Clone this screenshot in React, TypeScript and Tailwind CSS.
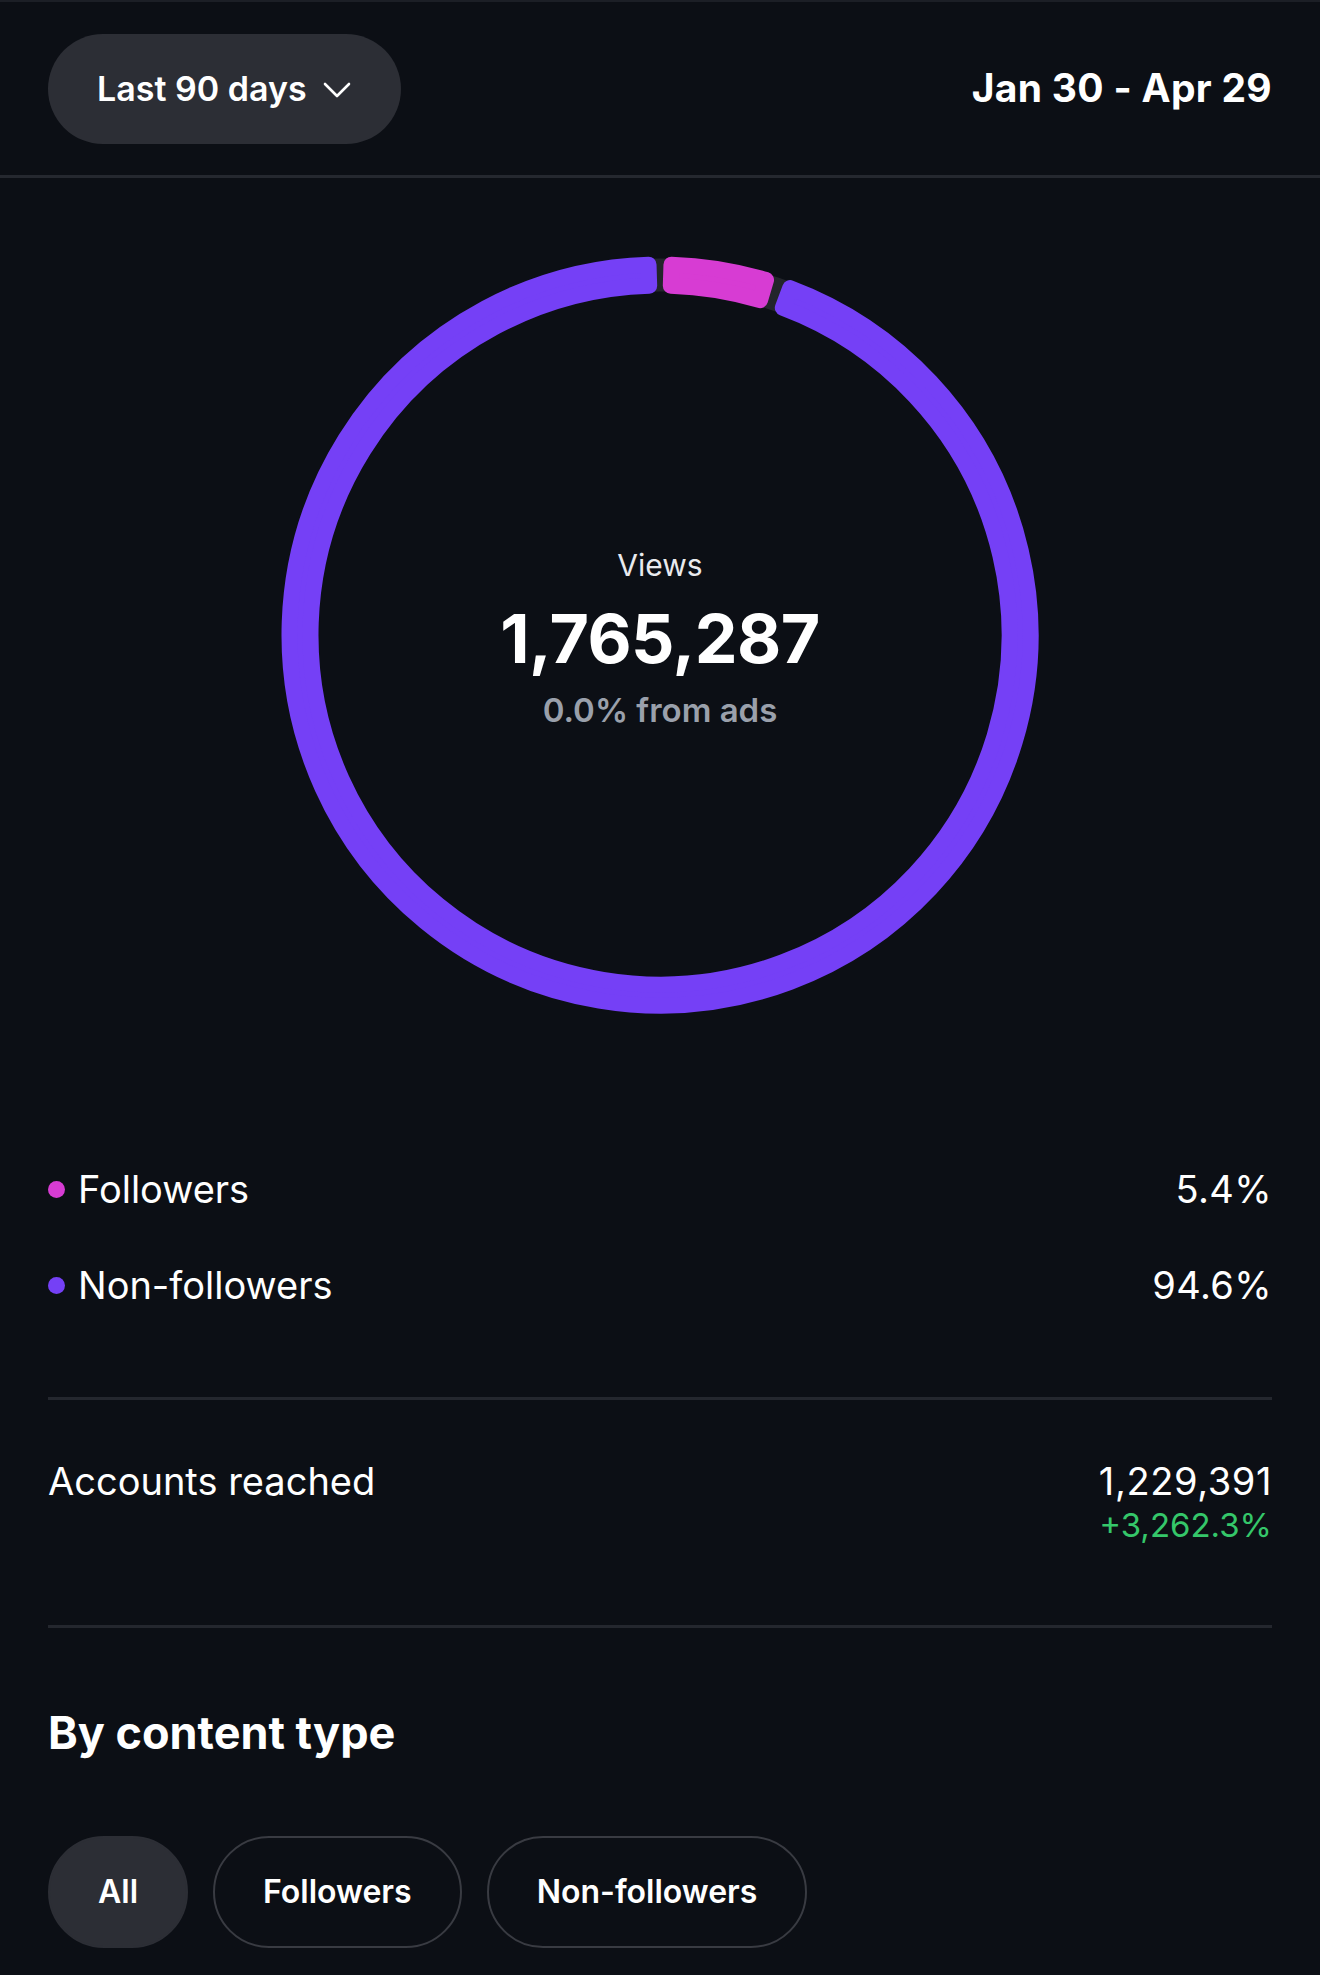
import React from 'react';

const CX = 380;
const CY = 380;
const R_MID = 360;
const BAND = 37;
const CORNER = 8;

function polar(r: number, deg: number) {
  const a = ((deg - 90) * Math.PI) / 180;
  return [CX + r * Math.cos(a), CY + r * Math.sin(a)];
}

// annular sector, shrunk by the corner radius so that a round-joined stroke of 2*CORNER
// gives back the full band with softened corners
function sector(a0: number, a1: number) {
  const rIn = R_MID - BAND / 2 + CORNER;
  const rOut = R_MID + BAND / 2 - CORNER;
  const pad = (CORNER / R_MID) * (180 / Math.PI);
  const s = a0 + pad;
  const e = a1 - pad;
  const large = e - s > 180 ? 1 : 0;
  const [x0, y0] = polar(rOut, s);
  const [x1, y1] = polar(rOut, e);
  const [x2, y2] = polar(rIn, e);
  const [x3, y3] = polar(rIn, s);
  return `M${x0} ${y0} A${rOut} ${rOut} 0 ${large} 1 ${x1} ${y1} L${x2} ${y2} A${rIn} ${rIn} 0 ${large} 0 ${x3} ${y3} Z`;
}

const segments = [
  { from: 0.5, to: 17.9, color: '#d73cd3' },
  { from: 19.3, to: 359.5, color: '#7540f6' },
];

const ViewsRing: React.FC = () => (
  <div className="relative w-[760px] h-[760px]">
    <svg width="760" height="760" viewBox="0 0 760 760">
      <circle cx={CX} cy={CY} r={R_MID} fill="none" stroke="#23252b" strokeWidth={BAND - 4} />
      {segments.map((s) => (
        <path
          key={s.color}
          d={sector(s.from, s.to)}
          fill={s.color}
          stroke={s.color}
          strokeWidth={CORNER * 2}
          strokeLinejoin="round"
        />
      ))}
    </svg>
    <div className="absolute inset-0 flex flex-col items-center justify-center pt-[6px]">
      <div className="text-[30px] leading-[36px] text-[#e9eaee]">Views</div>
      <div className="mt-[17px] text-[68px] leading-[76px] font-bold text-white tracking-[-0.5px]">1,765,287</div>
      <div className="mt-[15px] text-[33px] leading-[38px] font-semibold text-[#9aa0ab]">0.0% from ads</div>
    </div>
  </div>
);

const legend = [
  { label: 'Followers', value: '5.4%', color: 'bg-[#d73cd3]' },
  { label: 'Non-followers', value: '94.6%', color: 'bg-[#7540f6]' },
];

const chips = ['All', 'Followers', 'Non-followers'];

export default function App() {
  return (
    <div className="min-h-[1975px] bg-[#0c0f15] text-white font-['Inter',sans-serif] border-t-2 border-[#1c1f26]">
      <div className="h-[176px] px-12 flex items-center justify-between border-b-[3px] border-[#25282f]">
        <button className="h-[110px] pl-[49px] pr-[50px] rounded-full bg-[#2c2e35] flex items-center gap-[16px]">
          <span className="text-[34px] font-semibold text-white">Last 90 days</span>
          <svg width="28" height="16" viewBox="0 0 28 16" className="mt-[2px]">
            <polyline points="2,2 14,14 26,2" fill="none" stroke="white" strokeWidth="2.6" strokeLinecap="round" strokeLinejoin="round" />
          </svg>
        </button>
        <div className="text-[39px] font-bold text-white tracking-[0.3px]">Jan 30 - Apr 29</div>
      </div>

      <div className="flex justify-center pt-[77px]">
        <ViewsRing />
      </div>

      <div className="px-12 mt-[126px]">
        {legend.map((l) => (
          <div key={l.label} className="h-[96px] flex items-center justify-between">
            <div className="flex items-center gap-[13px]">
              <span className={`w-[17px] h-[17px] rounded-full ${l.color}`} />
              <span className="text-[38px] leading-[44px] text-white">{l.label}</span>
            </div>
            <span className="text-[38px] leading-[44px] text-white tracking-[0.4px]">{l.value}</span>
          </div>
        ))}

        <div className="mt-16 h-[3px] bg-[#24272e]" />

        <div className="pt-[59px] flex justify-between">
          <div className="text-[38px] leading-[44px] text-white">Accounts reached</div>
          <div className="flex flex-col items-end">
            <div className="text-[38px] leading-[44px] text-white tracking-[0.6px]">1,229,391</div>
            <div className="mt-1 text-[33px] leading-[36px] text-[#35c76a]">+3,262.3%</div>
          </div>
        </div>

        <div className="mt-[82px] h-[3px] bg-[#24272e]" />

        <h2 className="mt-[79px] text-[45px] leading-[52px] font-bold text-white">By content type</h2>

        <div className="mt-[77px] flex gap-[25px]">
          {chips.map((c, i) => (
            <button
              key={c}
              className={
                i === 0
                  ? 'h-[112px] px-12 rounded-full border-2 border-[#2c2e35] bg-[#2c2e35] text-[32px] font-semibold text-white'
                  : 'h-[112px] px-12 rounded-full border-2 border-[#393b42] bg-transparent text-[32px] font-semibold text-white'
              }
            >
              {c}
            </button>
          ))}
        </div>
      </div>
    </div>
  );
}
